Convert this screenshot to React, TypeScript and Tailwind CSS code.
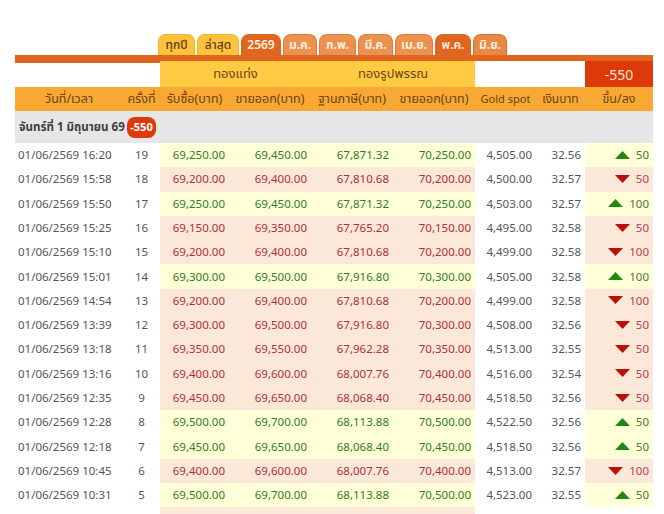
const F = "font-['Noto_Sans','Noto_Sans_Thai','Noto_Sans_CJK_SC',sans-serif]";
const tabs: [string, string, string][] = [
  ['ทุกปี', 'y', 'w-[37px]'], ['ล่าสุด', 'y', 'w-[42px]'], ['2569', 'd', 'w-[40px]'], ['ม.ค.', 'l', 'w-[34px]'], ['ก.พ.', 'l', 'w-[37px]'], ['มี.ค.', 'l', 'w-[35px]'], ['เม.ย.', 'l', 'w-[38px]'], ['พ.ค.', 'd', 'w-[36px]'], ['มิ.ย.', 'm', 'w-[34px]'],
];
const tabCls: Record<string, string> = {
  y: 'border-[#f5b02c] bg-[#fdc33c] text-[#5a3a10] font-medium',
  d: 'border-[#dd6320] bg-[#e0661f] text-[#fff2df] font-semibold',
  l: 'border-[#e37a38] bg-[#ec9150] text-[#fff2df] font-bold',
  m: 'border-[#df6c28] bg-[#e98745] text-[#fff2df] font-bold',
};
type R = [string, number, string, string, string, string, string, string, number];
const rows: R[] = [
  ['16:20', 19, '69,250.00', '69,450.00', '67,871.32', '70,250.00', '4,505.00', '32.56', 50],
  ['15:58', 18, '69,200.00', '69,400.00', '67,810.68', '70,200.00', '4,500.00', '32.57', -50],
  ['15:50', 17, '69,250.00', '69,450.00', '67,871.32', '70,250.00', '4,503.00', '32.57', 100],
  ['15:25', 16, '69,150.00', '69,350.00', '67,765.20', '70,150.00', '4,495.00', '32.58', -50],
  ['15:10', 15, '69,200.00', '69,400.00', '67,810.68', '70,200.00', '4,499.00', '32.58', -100],
  ['15:01', 14, '69,300.00', '69,500.00', '67,916.80', '70,300.00', '4,505.00', '32.58', 100],
  ['14:54', 13, '69,200.00', '69,400.00', '67,810.68', '70,200.00', '4,499.00', '32.58', -100],
  ['13:39', 12, '69,300.00', '69,500.00', '67,916.80', '70,300.00', '4,508.00', '32.56', -50],
  ['13:18', 11, '69,350.00', '69,550.00', '67,962.28', '70,350.00', '4,513.00', '32.55', -50],
  ['13:16', 10, '69,400.00', '69,600.00', '68,007.76', '70,400.00', '4,516.00', '32.54', -50],
  ['12:35', 9, '69,450.00', '69,650.00', '68,068.40', '70,450.00', '4,518.50', '32.56', -50],
  ['12:28', 8, '69,500.00', '69,700.00', '68,113.88', '70,500.00', '4,522.50', '32.56', 50],
  ['12:18', 7, '69,450.00', '69,650.00', '68,068.40', '70,450.00', '4,518.50', '32.56', 50],
  ['10:45', 6, '69,400.00', '69,600.00', '68,007.76', '70,400.00', '4,513.00', '32.57', -100],
  ['10:31', 5, '69,500.00', '69,700.00', '68,113.88', '70,500.00', '4,523.00', '32.55', 50],
];
const up = new Set([19, 17, 14, 8, 7, 5]);
const Tri = ({ down }: { down: boolean }) => (
  <svg width="15" height="8" viewBox="0 0 15 8" className="mr-[6px] shrink-0">
    <polygon points={down ? '0,0 15,0 7.5,8' : '0,8 15,8 7.5,0'} fill={down ? '#b81208' : '#22870f'} />
  </svg>
);
export default function App() {
  return (
    <div className={`${F} w-[664px] h-[514px] overflow-hidden bg-white pt-[34px] pl-[15px] text-[#555]`}>
      <div className="flex pl-[143px] gap-[2px] h-[21px] w-[638px]">
        {tabs.map(([t, k, w]) => (
          <div key={t} className={`${tabCls[k]} ${w} rounded-t-[8px] border border-b-0 text-center text-[12px] leading-[20px] whitespace-nowrap`}>{t}</div>
        ))}
      </div>
      <div className="w-[638px] h-[6px] bg-[#e0661f]" />
      <table className="w-[638px] table-fixed border-collapse text-[11.5px]">
        <colgroup>
          <col className="w-[108px]" />
          <col className="w-[37px]" />
          <col className="w-[69px]" />
          <col className="w-[82px]" />
          <col className="w-[82px]" />
          <col className="w-[82px]" />
          <col className="w-[61px]" />
          <col className="w-[49px]" />
          <col className="w-[68px]" />
        </colgroup>
        <thead>
          <tr className="h-[26px] text-[13px] text-[#6b4413]">
            <th colSpan={2} className="p-0 align-top">
              <div className="h-[2px] bg-[#e0661f]" />
            </th>
            <th colSpan={2} className="p-0 font-normal bg-[#fecb42]">ทองแท่ง</th>
            <th colSpan={2} className="p-0 font-normal bg-[#fecb42]">ทองรูปพรรณ</th>
            <th colSpan={2} className="p-0" />
            <th className="p-0 font-normal bg-[#dc3a08] text-[#f8e2cc] text-[14px]">-550</th>
          </tr>
          <tr className="h-[24px] bg-[#f9a933] text-[#6b4413] text-[12.5px]">
            {['วันที่/เวลา', 'ครั้งที่', 'รับซื้อ(บาท)', 'ขายออก(บาท)', 'ฐานภาษี(บาท)', 'ขายออก(บาท)'].map((h, i) => (
              <th key={i} className="p-0 font-normal whitespace-nowrap">{h}</th>
            ))}
            <th className="p-0 font-normal whitespace-nowrap text-[11px]">Gold spot</th>
            <th className="p-0 font-normal whitespace-nowrap text-[12px]">เงินบาท</th>
            <th className="p-0 font-normal whitespace-nowrap">ขึ้น/ลง</th>
          </tr>
          <tr className="h-[32px] bg-[#e6e6e6]">
            <th colSpan={9} className="p-0 pl-[4px] text-left">
              <div className="flex items-center font-bold text-[11.6px] text-[#3d3d3d]">
                <span className="w-[108px] whitespace-nowrap">จันทร์ที่ 1 มิถุนายน 69</span>
                <span className="rounded-[8px] bg-[#dc3a08] text-white text-[11px] h-[21px] w-[29px] flex items-center justify-center">-550</span>
              </div>
            </th>
          </tr>
        </thead>
        <tbody>
          {rows.map((r) => {
            const isUp = up.has(r[1]);
            const text = isUp ? 'text-[#2f7d1f]' : 'text-[#b03038]';
            const bg = isUp ? 'bg-[#ffffd8]' : 'bg-[#fbe8d9]';
            return (
              <tr key={r[1]} className="h-[24.3px] whitespace-nowrap">
                <td className="p-0 pb-[1px] pl-[3px]">01/06/2569 {r[0]}</td>
                <td className="p-0 pb-[1px] text-center">{r[1]}</td>
                {[2, 3, 4, 5].map((i) => (
                  <td key={i} className={`p-0 pb-[1px] pr-[4px] ${bg} ${text} text-right`}>{r[i]}</td>
                ))}
                <td className="p-0 pb-[1px] pr-[4px] text-right">{r[6]}</td>
                <td className="p-0 pb-[1px] pr-[4px] text-right">{r[7]}</td>
                <td className={`p-0 pb-[1px] ${bg}`}>
                  <div className={`flex items-center justify-end pr-[4px] ${isUp ? 'text-[#4a7a35]' : 'text-[#b5464a]'}`}>
                    <Tri down={!isUp} />
                    {Math.abs(r[8])}
                  </div>
                </td>
              </tr>
            );
          })}
          <tr className="h-[24.3px]">
            <td colSpan={2} />
            <td colSpan={4} className="bg-[#fbe8d9]" />
          </tr>
        </tbody>
      </table>
    </div>
  );
}
